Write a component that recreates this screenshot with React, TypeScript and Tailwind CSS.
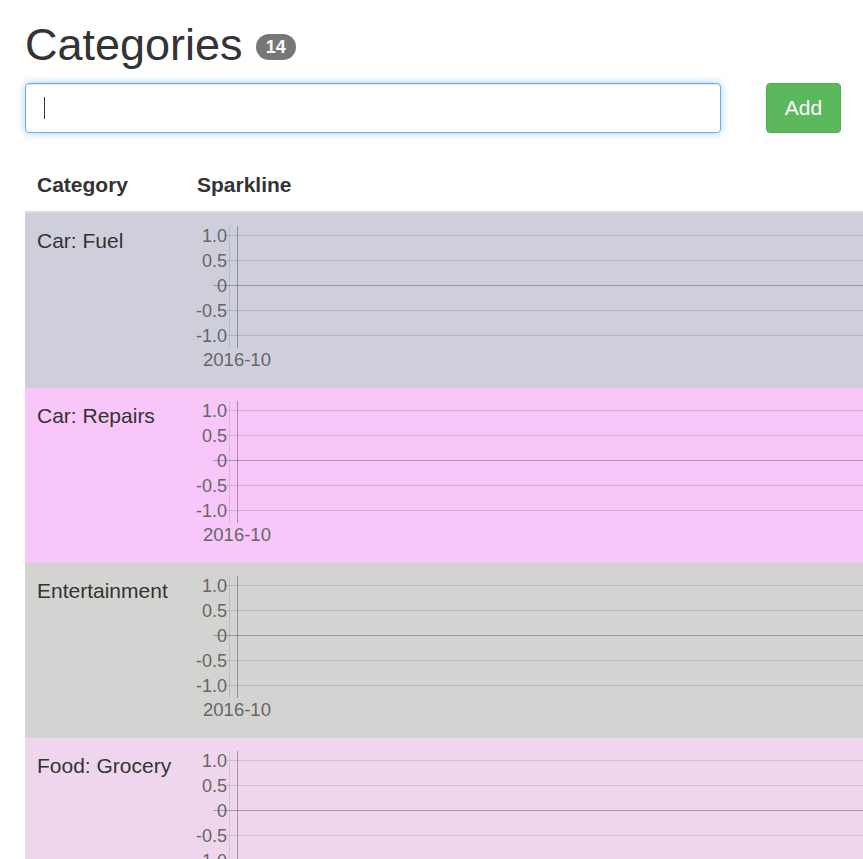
const rows = [
  { name: "Car: Fuel", bg: "bg-[#cfcfdc]" },
  { name: "Car: Repairs", bg: "bg-[#f8c6f8]" },
  { name: "Entertainment", bg: "bg-[#d3d4d1]" },
  { name: "Food: Grocery", bg: "bg-[#efd6ec]" },
];

const ticks = [
  { label: "1.0", y: 22 },
  { label: "0.5", y: 47 },
  { label: "0", y: 72 },
  { label: "-0.5", y: 97 },
  { label: "-1.0", y: 122 },
];

function Sparkline() {
  return (
    <svg width="720" height="163" className="block">
      {ticks.map((t) => (
        <g key={t.label}>
          <line
            x1={t.label === "0" ? 28 : 41}
            x2={720}
            y1={t.y + 0.5}
            y2={t.y + 0.5}
            stroke={t.label === "0" ? "rgba(0,0,0,0.28)" : "rgba(0,0,0,0.12)"}
          />
          <text
            x={42}
            y={t.y + 1}
            textAnchor="end"
            dominantBaseline="central"
            fill="#666"
            fontSize="18"
            fontFamily="Liberation Sans, Arial, sans-serif"
          >
            {t.label}
          </text>
        </g>
      ))}
      <line x1={44.5} x2={44.5} y1={13} y2={135} stroke="rgba(0,0,0,0.1)" />
      <line x1={52.5} x2={52.5} y1={13} y2={135} stroke="rgba(0,0,0,0.3)" />
      <text
        x={52}
        y={146}
        textAnchor="middle"
        dominantBaseline="central"
        fill="#666"
        fontSize="18.5"
        fontFamily="Liberation Sans, Arial, sans-serif"
      >
        2016-10
      </text>
    </svg>
  );
}

export default function App() {
  return (
    <div className="h-[859px] w-[863px] overflow-hidden bg-white font-['Liberation_Sans',Arial,sans-serif] text-[21px] text-[#333]">
      <div className="w-[960px] pl-[25px]">
        <div className="flex items-center pt-[21px] leading-[48px]">
          <h1 className="text-[45px] font-normal leading-[48px]">Categories</h1>
          <span className="ml-[13px] mt-[4px] rounded-[13px] bg-[#777] px-[10px] text-[18px] font-bold leading-[26px] text-white">
            14
          </span>
        </div>

        <div className="mt-[14px] flex w-[816px] gap-[45px]">
          <div className="flex h-[50px] w-[696px] items-center rounded-[4px] border border-[#66afe9] pl-[18px] shadow-[inset_0_1px_1px_rgba(0,0,0,0.075),0_0_8px_rgba(102,175,233,0.6)]">
            <span className="h-[22px] w-px bg-[#333]" />
          </div>
          <button className="h-[50px] w-[75px] rounded-[4px] border border-[#4cae4c] bg-[#5cb85c] text-[21px] text-white">
            Add
          </button>
        </div>

        <table className="mt-[26px] w-[935px] border-separate border-spacing-0 text-left">
          <thead>
            <tr>
              <th className="w-[160px] border-b-2 border-[#ddd] p-[12px] font-bold leading-[28px]">Category</th>
              <th className="border-b-2 border-[#ddd] p-[12px] font-bold leading-[28px]">Sparkline</th>
            </tr>
          </thead>
          <tbody>
            {rows.map((r) => (
              <tr key={r.name} className={r.bg}>
                <td className="h-[175px] px-[12px] pt-[14px] align-top leading-[28px]">{r.name}</td>
                <td className="h-[175px] p-0 align-top">
                  <Sparkline />
                </td>
              </tr>
            ))}
          </tbody>
        </table>
      </div>
    </div>
  );
}
